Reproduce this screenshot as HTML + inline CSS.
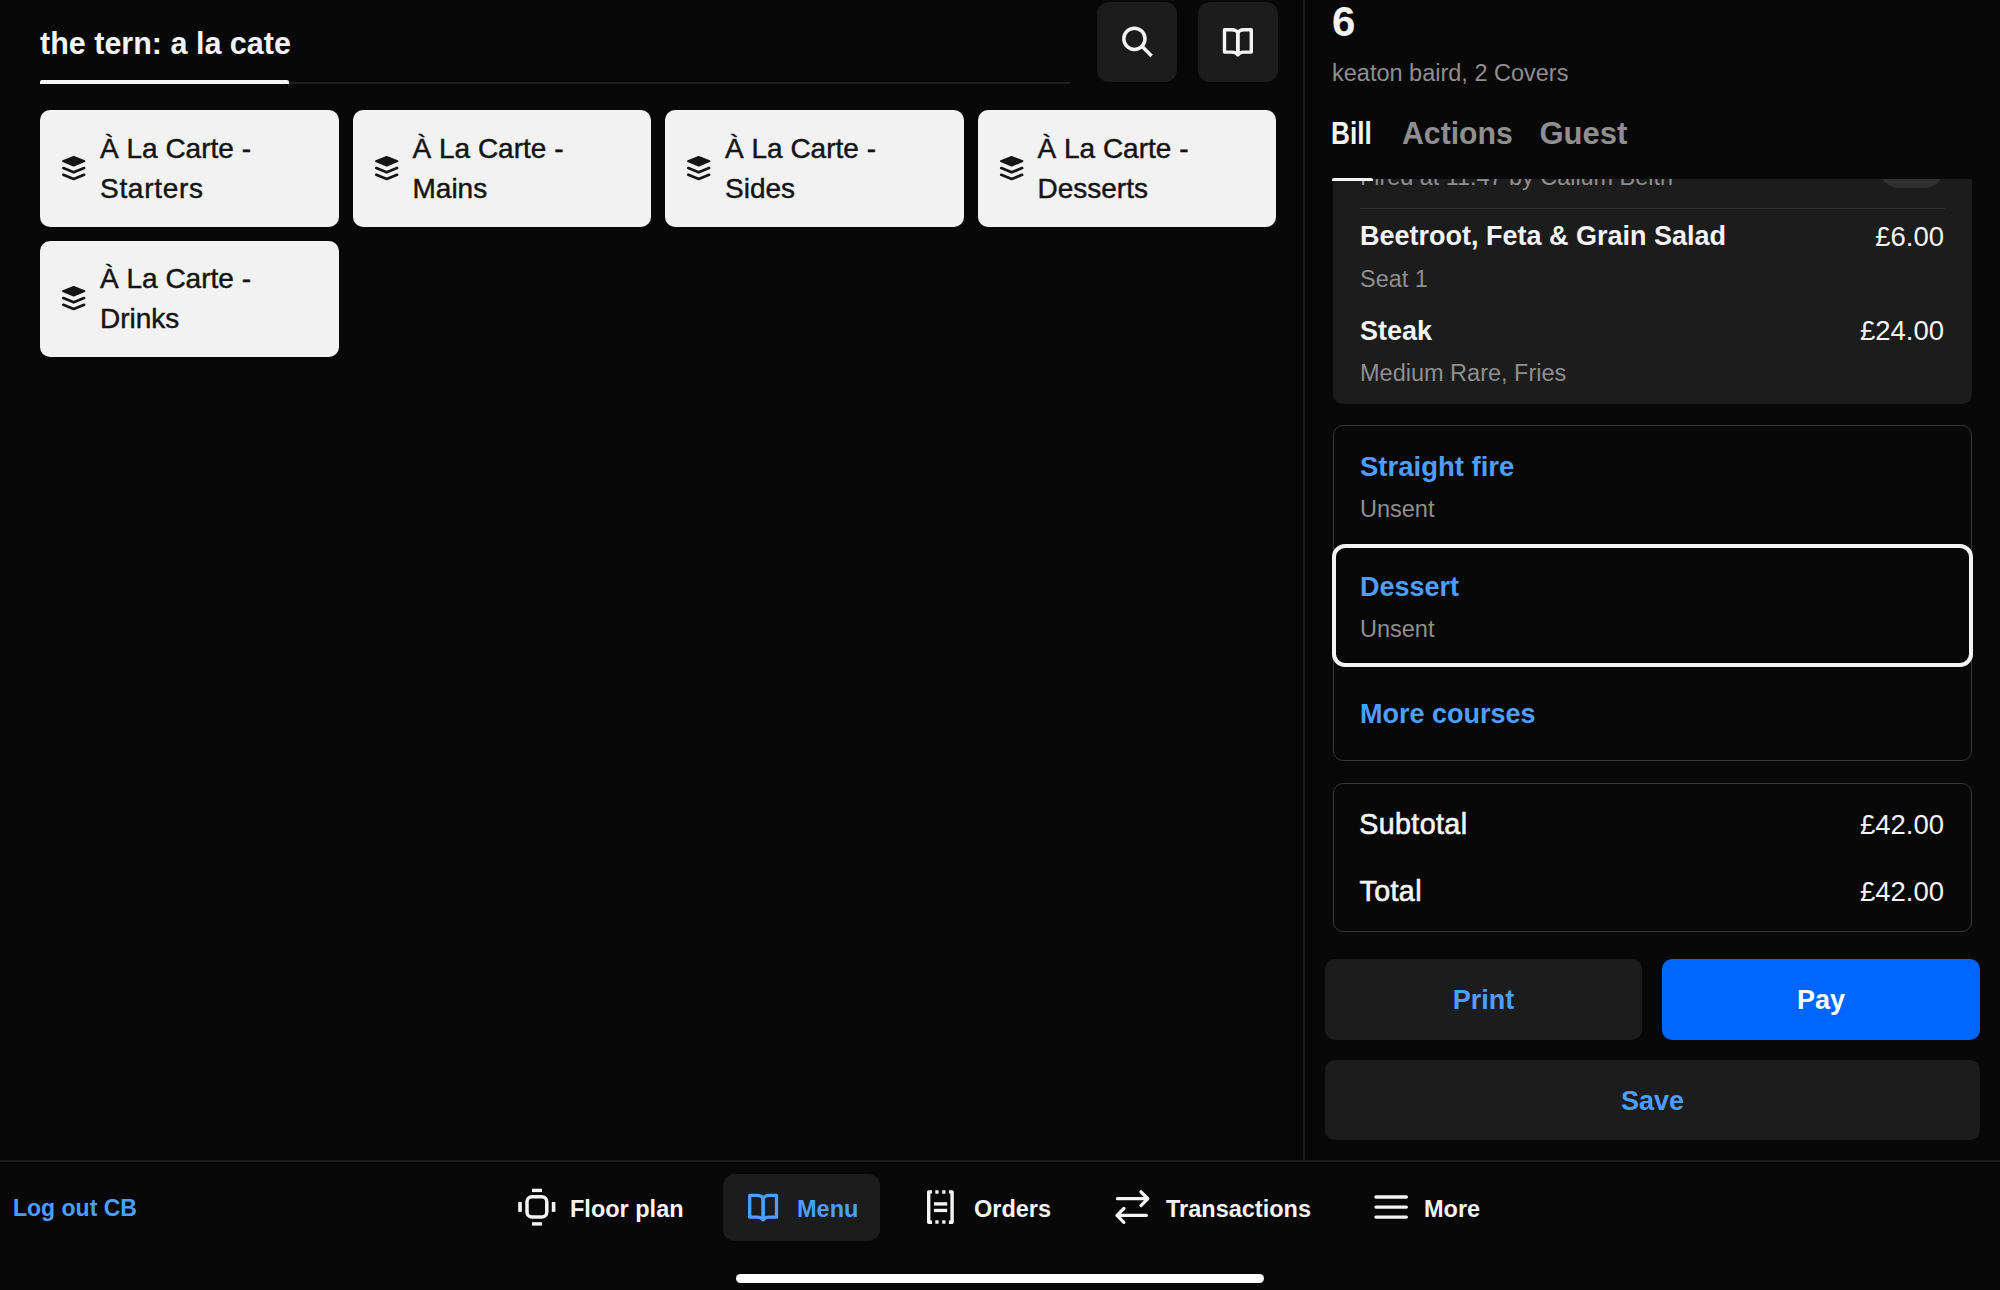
<!DOCTYPE html>
<html><head><meta charset="utf-8"><style>
html,body{margin:0;padding:0;}
body{width:2000px;height:1290px;background:#080808;position:relative;overflow:hidden;font-family:"Liberation Sans",sans-serif;}
.t{position:absolute;white-space:nowrap;}
.r{position:absolute;}
.s{position:absolute;overflow:visible;}
</style></head><body>
<div class="t" style="top:24.83px;font-size:30.5px;line-height:36.6px;font-weight:700;color:#f4f4f4;left:40px;">the tern: a la cate</div>
<div class="r" style="left:40px;top:82px;width:1030px;height:1.5px;background:#1e1e1e;border-radius:0px;"></div>
<div class="r" style="left:40px;top:80px;width:249px;height:4px;background:#f4f4f4;border-radius:0px;border-radius:2px 2px 0 0;"></div>
<div class="r" style="left:1097px;top:2px;width:80px;height:80px;background:#1c1c1c;border-radius:12px;"></div>
<div class="r" style="left:1198px;top:2px;width:80px;height:80px;background:#1c1c1c;border-radius:12px;"></div>
<svg class="s" style="left:1110px;top:15px" width="56" height="56" viewBox="1110 15 56 56"><circle cx="1134.4" cy="38.8" r="10.6" fill="none" stroke="#f4f4f4" stroke-width="3.5"/><path d="M1142.2 46.6 L1151.6 56" stroke="#f4f4f4" stroke-width="3.5" stroke-linecap="butt"/></svg>
<svg class="s" style="left:0;top:0" width="1300" height="100" viewBox="0 0 1300 100"><path d="M1237.9 33.4 Q1236.7 29.8 1231.9 29.8 L1224.5 29.8 L1224.5 52.1 L1231.9 52.1 Q1236.5 52.1 1237.7 54.7 M1238.1000000000001 54.7 Q1239.3000000000002 52.1 1243.9 52.1 L1251.3000000000002 52.1 L1251.3000000000002 29.8 L1243.9 29.8 Q1239.1000000000001 29.8 1237.9 33.4" fill="none" stroke="#f4f4f4" stroke-width="3.4" stroke-linejoin="round" stroke-linecap="round"/><path d="M1237.9 33.4 L1237.9 55.3" stroke="#f4f4f4" stroke-width="3.8" stroke-linecap="butt"/></svg>
<div class="r" style="left:40px;top:110.3px;width:298.5px;height:116.5px;background:#f2f2f2;border-radius:10px;"></div>
<div class="t" style="top:131.50px;font-size:28px;line-height:33.6px;font-weight:400;color:#141414;left:100px;-webkit-text-stroke:0.45px #141414;">À La Carte -</div>
<div class="t" style="top:171.80px;font-size:28px;line-height:33.6px;font-weight:400;color:#141414;left:100px;-webkit-text-stroke:0.45px #141414;letter-spacing:0.7px;">Starters</div>
<svg class="s" style="left:62px;top:156.0px" width="24" height="25" viewBox="0 0 24 25"><path d="M1 5.2 L11.7 1 L22.4 5.2 L11.7 9.6 Z" fill="#141414" stroke="#141414" stroke-width="2" stroke-linejoin="round"/><path d="M1.3 12.1 L11.7 16.3 L22.1 12.1" fill="none" stroke="#141414" stroke-width="2.7" stroke-linecap="round" stroke-linejoin="round"/><path d="M1.3 18.8 L11.7 23 L22.1 18.8" fill="none" stroke="#141414" stroke-width="2.7" stroke-linecap="round" stroke-linejoin="round"/></svg>
<div class="r" style="left:352.5px;top:110.3px;width:298.5px;height:116.5px;background:#f2f2f2;border-radius:10px;"></div>
<div class="t" style="top:131.50px;font-size:28px;line-height:33.6px;font-weight:400;color:#141414;left:412.5px;-webkit-text-stroke:0.45px #141414;">À La Carte -</div>
<div class="t" style="top:171.80px;font-size:28px;line-height:33.6px;font-weight:400;color:#141414;left:412.5px;-webkit-text-stroke:0.45px #141414;">Mains</div>
<svg class="s" style="left:374.5px;top:156.0px" width="24" height="25" viewBox="0 0 24 25"><path d="M1 5.2 L11.7 1 L22.4 5.2 L11.7 9.6 Z" fill="#141414" stroke="#141414" stroke-width="2" stroke-linejoin="round"/><path d="M1.3 12.1 L11.7 16.3 L22.1 12.1" fill="none" stroke="#141414" stroke-width="2.7" stroke-linecap="round" stroke-linejoin="round"/><path d="M1.3 18.8 L11.7 23 L22.1 18.8" fill="none" stroke="#141414" stroke-width="2.7" stroke-linecap="round" stroke-linejoin="round"/></svg>
<div class="r" style="left:665px;top:110.3px;width:298.5px;height:116.5px;background:#f2f2f2;border-radius:10px;"></div>
<div class="t" style="top:131.50px;font-size:28px;line-height:33.6px;font-weight:400;color:#141414;left:725px;-webkit-text-stroke:0.45px #141414;">À La Carte -</div>
<div class="t" style="top:171.80px;font-size:28px;line-height:33.6px;font-weight:400;color:#141414;left:725px;-webkit-text-stroke:0.45px #141414;">Sides</div>
<svg class="s" style="left:687px;top:156.0px" width="24" height="25" viewBox="0 0 24 25"><path d="M1 5.2 L11.7 1 L22.4 5.2 L11.7 9.6 Z" fill="#141414" stroke="#141414" stroke-width="2" stroke-linejoin="round"/><path d="M1.3 12.1 L11.7 16.3 L22.1 12.1" fill="none" stroke="#141414" stroke-width="2.7" stroke-linecap="round" stroke-linejoin="round"/><path d="M1.3 18.8 L11.7 23 L22.1 18.8" fill="none" stroke="#141414" stroke-width="2.7" stroke-linecap="round" stroke-linejoin="round"/></svg>
<div class="r" style="left:977.5px;top:110.3px;width:298.5px;height:116.5px;background:#f2f2f2;border-radius:10px;"></div>
<div class="t" style="top:131.50px;font-size:28px;line-height:33.6px;font-weight:400;color:#141414;left:1037.5px;-webkit-text-stroke:0.45px #141414;">À La Carte -</div>
<div class="t" style="top:171.80px;font-size:28px;line-height:33.6px;font-weight:400;color:#141414;left:1037.5px;-webkit-text-stroke:0.45px #141414;">Desserts</div>
<svg class="s" style="left:999.5px;top:156.0px" width="24" height="25" viewBox="0 0 24 25"><path d="M1 5.2 L11.7 1 L22.4 5.2 L11.7 9.6 Z" fill="#141414" stroke="#141414" stroke-width="2" stroke-linejoin="round"/><path d="M1.3 12.1 L11.7 16.3 L22.1 12.1" fill="none" stroke="#141414" stroke-width="2.7" stroke-linecap="round" stroke-linejoin="round"/><path d="M1.3 18.8 L11.7 23 L22.1 18.8" fill="none" stroke="#141414" stroke-width="2.7" stroke-linecap="round" stroke-linejoin="round"/></svg>
<div class="r" style="left:40px;top:240.5px;width:298.5px;height:116.5px;background:#f2f2f2;border-radius:10px;"></div>
<div class="t" style="top:261.70px;font-size:28px;line-height:33.6px;font-weight:400;color:#141414;left:100px;-webkit-text-stroke:0.45px #141414;">À La Carte -</div>
<div class="t" style="top:302.00px;font-size:28px;line-height:33.6px;font-weight:400;color:#141414;left:100px;-webkit-text-stroke:0.45px #141414;">Drinks</div>
<svg class="s" style="left:62px;top:286.2px" width="24" height="25" viewBox="0 0 24 25"><path d="M1 5.2 L11.7 1 L22.4 5.2 L11.7 9.6 Z" fill="#141414" stroke="#141414" stroke-width="2" stroke-linejoin="round"/><path d="M1.3 12.1 L11.7 16.3 L22.1 12.1" fill="none" stroke="#141414" stroke-width="2.7" stroke-linecap="round" stroke-linejoin="round"/><path d="M1.3 18.8 L11.7 23 L22.1 18.8" fill="none" stroke="#141414" stroke-width="2.7" stroke-linecap="round" stroke-linejoin="round"/></svg>
<div class="r" style="left:1303px;top:0px;width:2px;height:1160px;background:#1c1c1c;border-radius:0px;"></div>
<div class="r" style="left:0px;top:1160px;width:2000px;height:2px;background:#1c1c1c;border-radius:0px;"></div>
<div class="t" style="top:-3.15px;font-size:42px;line-height:50.4px;font-weight:700;color:#f4f4f4;left:1332px;">6</div>
<div class="t" style="top:58.76px;font-size:23.5px;line-height:28.2px;font-weight:400;color:#8f8f8f;left:1332px;">keaton baird, 2 Covers</div>
<div class="t" style="top:114.66px;font-size:31px;line-height:37.2px;font-weight:700;color:#f4f4f4;left:1331px;transform:scaleX(0.845);transform-origin:0 0;">Bill</div>
<div class="t" style="top:114.66px;font-size:31px;line-height:37.2px;font-weight:700;color:#8f8f8f;left:1401.5px;transform:scaleX(0.975);transform-origin:0 0;">Actions</div>
<div class="t" style="top:114.66px;font-size:31px;line-height:37.2px;font-weight:700;color:#8f8f8f;left:1539.5px;">Guest</div>
<div class="r" style="left:1320px;top:179px;width:680px;height:981px;overflow:hidden;">
<div class="r" style="left:13.00px;top:-119.00px;width:639px;height:344px;background:#1c1c1c;border-radius:10px;"></div>
<div class="t" style="top:-15.75px;font-size:23.4px;line-height:28.08px;font-weight:400;color:#8f8f8f;left:40.00px;">Fired at 11:47 by Callum Beith</div>
<div class="r" style="left:558.50px;top:-32.00px;width:65.5px;height:40.5px;background:#303030;border-radius:20px;"></div>
<div class="r" style="left:40.00px;top:28.50px;width:585px;height:1.5px;background:#333333;border-radius:0px;"></div>
<div class="t" style="top:41.44px;font-size:27px;line-height:32.4px;font-weight:700;color:#f4f4f4;left:40.00px;">Beetroot, Feta &amp; Grain Salad</div>
<div class="t" style="top:40.97px;font-size:27.5px;line-height:33.0px;font-weight:400;color:#f4f4f4;right:56.00px;text-align:right;">£6.00</div>
<div class="t" style="top:85.76px;font-size:23.5px;line-height:28.2px;font-weight:400;color:#8f8f8f;left:40.00px;">Seat 1</div>
<div class="t" style="top:136.04px;font-size:27px;line-height:32.4px;font-weight:700;color:#f4f4f4;left:40.00px;">Steak</div>
<div class="t" style="top:135.37px;font-size:27.5px;line-height:33.0px;font-weight:400;color:#f4f4f4;right:56.00px;text-align:right;">£24.00</div>
<div class="t" style="top:179.76px;font-size:23.5px;line-height:28.2px;font-weight:400;color:#8f8f8f;left:40.00px;">Medium Rare, Fries</div>
<div class="r" style="left:13.00px;top:246.00px;width:639px;height:335.5px;background:transparent;border-radius:10px;box-sizing:border-box;border:1.5px solid #363636;"></div>
<div class="t" style="top:270.57px;font-size:27.5px;line-height:33.0px;font-weight:700;color:#4d9eff;left:40.00px;">Straight fire</div>
<div class="t" style="top:315.56px;font-size:23.5px;line-height:28.2px;font-weight:400;color:#8f8f8f;left:40.00px;">Unsent</div>
<div class="r" style="left:11.50px;top:364.80px;width:641.5px;height:123.7px;background:#080808;border-radius:13px;box-sizing:border-box;border:4px solid #f4f4f4;"></div>
<div class="t" style="top:392.24px;font-size:27px;line-height:32.4px;font-weight:700;color:#4d9eff;left:40.00px;">Dessert</div>
<div class="t" style="top:435.76px;font-size:23.5px;line-height:28.2px;font-weight:400;color:#8f8f8f;left:40.00px;">Unsent</div>
<div class="t" style="top:518.74px;font-size:27px;line-height:32.4px;font-weight:700;color:#4d9eff;left:40.00px;">More courses</div>
<div class="r" style="left:13.00px;top:604.00px;width:639px;height:148.5px;background:transparent;border-radius:10px;box-sizing:border-box;border:1.5px solid #363636;"></div>
<div class="t" style="top:627.93px;font-size:28.6px;line-height:34.32px;font-weight:400;color:#f4f4f4;left:39.30px;-webkit-text-stroke:0.65px #f4f4f4;letter-spacing:0.4px;">Subtotal</div>
<div class="t" style="top:628.97px;font-size:27.5px;line-height:33.0px;font-weight:400;color:#f4f4f4;right:56.00px;text-align:right;">£42.00</div>
<div class="t" style="top:694.93px;font-size:28.6px;line-height:34.32px;font-weight:400;color:#f4f4f4;left:39.50px;-webkit-text-stroke:0.65px #f4f4f4;letter-spacing:0.4px;">Total</div>
<div class="t" style="top:695.97px;font-size:27.5px;line-height:33.0px;font-weight:400;color:#f4f4f4;right:56.00px;text-align:right;">£42.00</div>
<div class="r" style="left:5.00px;top:780.30px;width:317px;height:80.5px;background:#1c1c1c;border-radius:10px;"></div>
<div class="t" style="top:805.44px;font-size:27px;line-height:32.4px;font-weight:700;color:#4d9eff;left:5.00px;width:317px;text-align:center;">Print</div>
<div class="r" style="left:342.00px;top:780.30px;width:318px;height:80.7px;background:#0066ff;border-radius:10px;"></div>
<div class="t" style="top:805.44px;font-size:27px;line-height:32.4px;font-weight:700;color:#ffffff;left:342.00px;width:318px;text-align:center;">Pay</div>
<div class="r" style="left:5.00px;top:881.00px;width:655px;height:80px;background:#1c1c1c;border-radius:10px;"></div>
<div class="t" style="top:905.94px;font-size:27px;line-height:32.4px;font-weight:700;color:#4d9eff;left:5.00px;width:655px;text-align:center;">Save</div>
</div>
<div class="r" style="left:1332px;top:177.5px;width:41px;height:3.5px;background:#f4f4f4;border-radius:0px;border-radius:2px 2px 0 0;"></div>
<div class="t" style="top:1195.23px;font-size:23px;line-height:27.6px;font-weight:700;color:#4d9eff;left:13px;">Log out CB</div>
<div class="r" style="left:723px;top:1174px;width:157px;height:67px;background:#1c1c1c;border-radius:12px;"></div>
<div class="t" style="top:1194.56px;font-size:23.5px;line-height:28.2px;font-weight:700;color:#f4f4f4;left:570px;">Floor plan</div>
<div class="t" style="top:1194.56px;font-size:23.5px;line-height:28.2px;font-weight:700;color:#4d9eff;left:797px;">Menu</div>
<div class="t" style="top:1194.56px;font-size:23.5px;line-height:28.2px;font-weight:700;color:#f4f4f4;left:974px;">Orders</div>
<div class="t" style="top:1194.56px;font-size:23.5px;line-height:28.2px;font-weight:700;color:#f4f4f4;left:1166px;">Transactions</div>
<div class="t" style="top:1194.56px;font-size:23.5px;line-height:28.2px;font-weight:700;color:#f4f4f4;left:1424px;">More</div>
<svg class="s" style="left:0;top:1150px" width="2000" height="140" viewBox="0 1150 2000 140"><rect x="527" y="1196.8" width="19.8" height="20.3" rx="5" fill="none" stroke="#f4f4f4" stroke-width="3.5"/><rect x="532" y="1188.7" width="10" height="3.4" fill="#f4f4f4"/><rect x="532" y="1222.2" width="10" height="3.4" fill="#f4f4f4"/><rect x="518.2" y="1202" width="3.6" height="9.9" fill="#f4f4f4"/><rect x="551.8" y="1202" width="3.6" height="9.9" fill="#f4f4f4"/><path d="M763.1 1199.0 Q761.9 1195.4 757.1 1195.4 L749.7 1195.4 L749.7 1217.2 L757.1 1217.2 Q761.7 1217.2 762.9 1219.8 M763.3000000000001 1219.8 Q764.5 1217.2 769.1 1217.2 L776.5 1217.2 L776.5 1195.4 L769.1 1195.4 Q764.3000000000001 1195.4 763.1 1199.0" fill="none" stroke="#4d9eff" stroke-width="3.3" stroke-linejoin="round" stroke-linecap="round"/><path d="M763.1 1199.0 L763.1 1220.4" stroke="#4d9eff" stroke-width="3.6999999999999997" stroke-linecap="butt"/><path d="M932 1191.9 L928.7 1191.9 L928.7 1222.2 L932 1222.2 M948.9 1191.9 L952.1 1191.9 L952.1 1222.2 L948.9 1222.2" fill="none" stroke="#f4f4f4" stroke-width="3.4" stroke-linejoin="round"/><rect x="935.3" y="1190.3" width="3.3" height="3.4" fill="#f4f4f4"/><rect x="942.2" y="1190.3" width="3.3" height="3.4" fill="#f4f4f4"/><rect x="935.3" y="1220.3" width="3.3" height="3.4" fill="#f4f4f4"/><rect x="942.2" y="1220.3" width="3.3" height="3.4" fill="#f4f4f4"/><rect x="934" y="1202.2" width="13.2" height="3.4" fill="#f4f4f4"/><rect x="934" y="1208.8" width="13.2" height="3.3" fill="#f4f4f4"/><path d="M1117.5 1198.7 H1147 M1141 1191.8 L1147.8 1198.7 L1141 1205.6 M1146.3 1215.4 H1117 M1123.9 1208.5 L1117 1215.4 L1123.9 1222.3" fill="none" stroke="#f4f4f4" stroke-width="3.3" stroke-linecap="round" stroke-linejoin="round"/><path d="M1376 1197 H1406.3 M1376 1207.1 H1406.3 M1376 1217.1 H1406.3" stroke="#f4f4f4" stroke-width="3.4" stroke-linecap="round"/></svg>
<div class="r" style="left:736px;top:1273.7px;width:528px;height:9.8px;background:#ffffff;border-radius:4.9px;"></div>
</body></html>
